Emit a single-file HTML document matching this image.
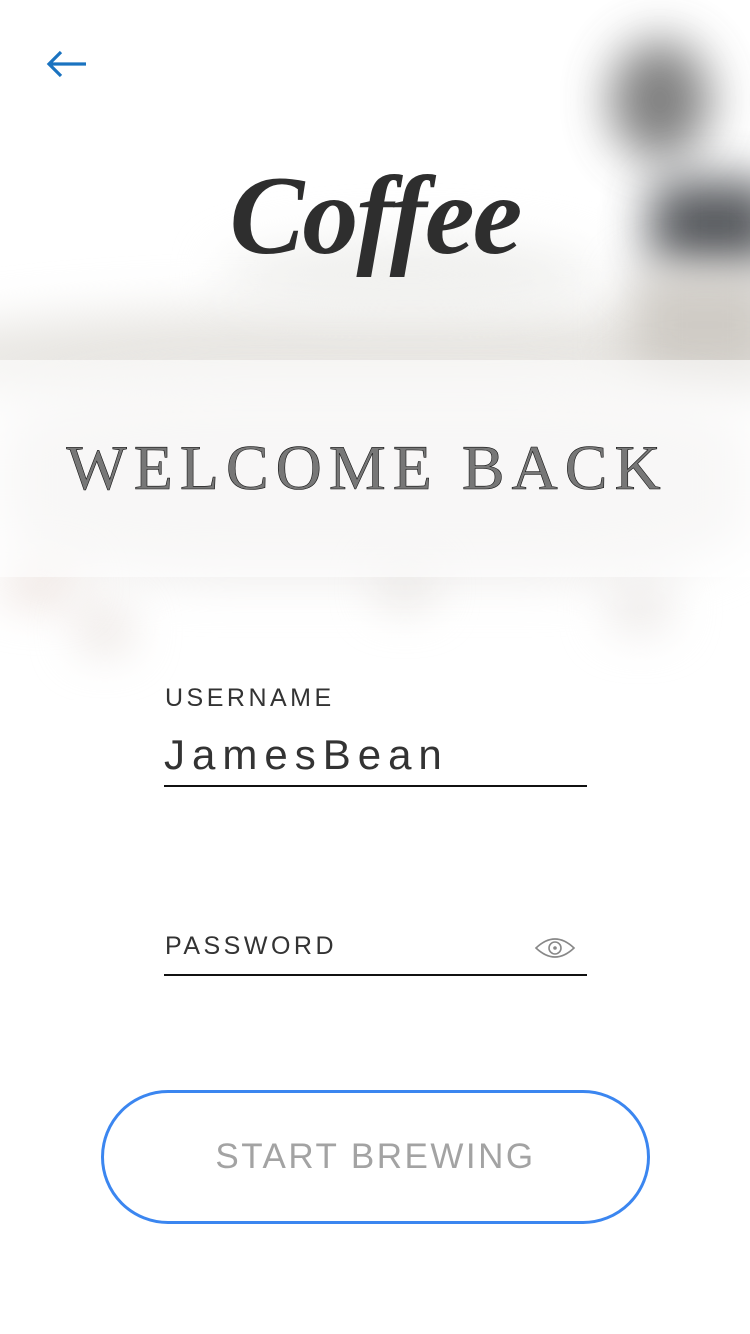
<!DOCTYPE html>
<html><head><meta charset="utf-8"><style>
html,body{margin:0;padding:0;}
body{width:750px;height:1334px;position:relative;overflow:hidden;background:#fff;font-family:"Liberation Sans",sans-serif;}
.bg{position:absolute;left:0;top:0;width:750px;height:700px;overflow:hidden;}
.b{position:absolute;filter:blur(24px);border-radius:50%;}
.band{position:absolute;left:0;top:360px;width:750px;height:217px;background:rgba(255,255,255,0.6);}
.coffee{position:absolute;left:0;width:750px;top:152px;text-align:center;font-family:"Liberation Serif",serif;font-weight:bold;font-style:italic;font-size:112px;color:#2e2e2e;letter-spacing:-2px;}
.welcome{position:absolute;left:-8px;width:750px;top:428px;text-align:center;font-family:"Liberation Serif",serif;font-size:64px;letter-spacing:7px;line-height:80px;-webkit-text-stroke:0.6px #111;color:#777;}
.lbl{position:absolute;left:165px;font-size:25px;letter-spacing:3.5px;color:#333;}
.line{position:absolute;left:164px;width:423px;height:1.5px;background:#111;}
.val{position:absolute;left:164px;top:731px;font-size:42px;letter-spacing:7px;color:#333;}
.btn{position:absolute;left:101px;top:1090px;width:543px;height:128px;border:3px solid #3b86f0;border-radius:70px;text-align:center;line-height:128px;font-size:35px;letter-spacing:2.5px;color:#a3a3a3;}
</style></head><body>
<div class="bg">
  <div class="b" style="left:-80px;top:310px;width:900px;height:100px;background:#e8e6e2;border-radius:40%;"></div>
  <div class="b" style="left:610px;top:40px;width:100px;height:120px;background:#555;opacity:.75;"></div>
  <div class="b" style="left:650px;top:180px;width:130px;height:90px;background:#3a3d42;border-radius:20%;opacity:.85;"></div>
  <div class="b" style="left:630px;top:270px;width:150px;height:110px;background:#cfcbc5;border-radius:20%;"></div>
  <div class="b" style="left:220px;top:240px;width:380px;height:70px;background:#efefed;"></div>
  <div class="b" style="left:0px;top:380px;width:750px;height:200px;background:#eeeceb;border-radius:30%;"></div>
  <div class="b" style="left:80px;top:610px;width:50px;height:40px;background:#e4dcd8;"></div>
  <div class="b" style="left:380px;top:570px;width:50px;height:35px;background:#e2dedb;"></div>
  <div class="b" style="left:610px;top:585px;width:60px;height:45px;background:#e8e4e2;"></div>
  <div class="b" style="left:0;top:570px;width:80px;height:30px;background:#e6d8d2;"></div>
</div>
<div class="band"></div>
<svg style="position:absolute;left:44px;top:48px" width="46" height="32" viewBox="0 0 46 32"><path d="M42 16H5M17 4L5 16l12 12" fill="none" stroke="#1a73c0" stroke-width="3.2"/></svg>
<div class="coffee">Coffee</div>
<div class="welcome">WELCOME BACK</div>
<div class="lbl" style="top:684px;">USERNAME</div>
<div class="val">JamesBean</div>
<div class="line" style="top:785px;"></div>
<div class="lbl" style="top:932px;">PASSWORD</div>
<svg style="position:absolute;left:534px;top:934px" width="42" height="28" viewBox="0 0 42 28"><path d="M2 14Q21 -4 40 14Q21 32 2 14Z" fill="none" stroke="#888" stroke-width="1.6"/><circle cx="21" cy="14" r="6" fill="none" stroke="#888" stroke-width="1.6"/><circle cx="21" cy="14" r="1.8" fill="#888"/></svg>
<div class="line" style="top:974px;"></div>
<div class="btn">START BREWING</div>
</body></html>
